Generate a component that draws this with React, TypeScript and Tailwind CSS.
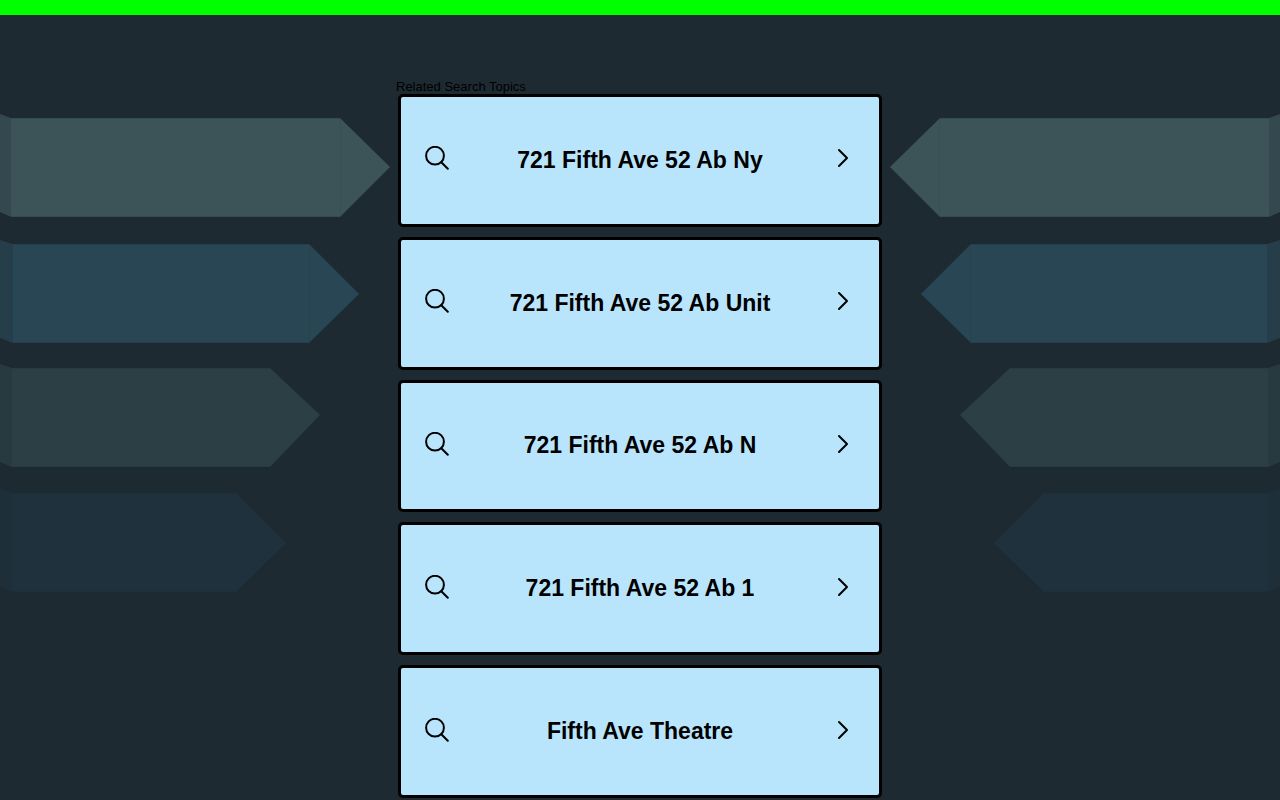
const topics = [
  '721 Fifth Ave 52 Ab Ny',
  '721 Fifth Ave 52 Ab Unit',
  '721 Fifth Ave 52 Ab N',
  '721 Fifth Ave 52 Ab 1',
  'Fifth Ave Theatre',
];

// top: y of the band, fold: x where the side face meets the band,
// base: x where the arrow head starts, tip: y of the arrow point
const ribbons = [
  { top: 18, fold: 11, base: 340, tip: 67, face: '#3c5458', side: '#33484f', seam: true },
  { top: 144, fold: 13, base: 309, tip: 194, face: '#284653', side: '#253e4a', seam: true },
  { top: 268, fold: 12, base: 270, tip: 315, face: '#2c3f44', side: '#28393f', seam: false },
  { top: 393, fold: 12, base: 236, tip: 443, face: '#1f313c', side: '#1e2f39', seam: true },
];

function Ribbons({ className }: { className?: string }) {
  return (
    <svg className={className} width="396" height="500" viewBox="0 0 396 500" aria-hidden="true">
      {ribbons.map(({ top, fold, base, tip, face, side, seam }) => (
        <g key={top}>
          <path d={`M0 ${top - 4}L${fold} ${top}V${top + 99}L0 ${top + 94}Z`} fill={side} />
          <path
            d={`M${fold} ${top}H${base}L${base + 50} ${tip}L${base} ${top + 99}H${fold}Z`}
            fill={face}
          />
          <path
            d={`M${fold} ${top + 0.5}H${base}M${fold} ${top + 98.5}H${base}`}
            stroke={side}
            strokeOpacity="0.6"
          />
          {seam && (
            <path d={`M${base + 0.5} ${top + 1}V${top + 98}`} stroke={side} strokeOpacity="0.4" />
          )}
        </g>
      ))}
    </svg>
  );
}

function SearchIcon() {
  return (
    <svg className="mb-1 shrink-0" width="24" height="24" viewBox="0 0 24 24" fill="none" stroke="#000" strokeWidth="2" strokeLinecap="round" aria-hidden="true">
      <circle cx="10" cy="9.7" r="8.9" />
      <path d="M16.3 16.2L22.8 22.7" />
    </svg>
  );
}

function ChevronIcon() {
  return (
    <svg className="mb-1 shrink-0" width="24" height="24" viewBox="0 0 24 24" fill="none" stroke="#000" strokeWidth="2" strokeLinecap="round" strokeLinejoin="round" aria-hidden="true">
      <path d="M8 4L16 12L8 20" />
    </svg>
  );
}

function TopicCard({ title }: { title: string }) {
  return (
    <a
      href="#"
      className="flex h-full items-center rounded-[5px] border-3 border-black bg-[#b9e5fc] px-6 text-black"
    >
      <SearchIcon />
      <span className="mb-px flex-1 text-center text-[23px] leading-7 font-bold">{title}</span>
      <ChevronIcon />
    </a>
  );
}

export default function App() {
  return (
    <div className="min-h-screen bg-[#1e2a32] font-['Liberation_Sans',Arial,sans-serif]">
      <div className="h-[15px] bg-[#00ff00]" />
      <div className="flex justify-center">
        <div className="flex min-w-0 flex-1 justify-start overflow-hidden pt-[85px]">
          <Ribbons className="shrink-0" />
        </div>
        <main className="w-[488px] shrink-0 pt-16">
          <h1 className="text-[13px] leading-[15px] text-black">Related Search Topics</h1>
          <ul className="grid h-[704px] auto-rows-fr gap-[10px] px-[2px]">
            {topics.map((title) => (
              <li key={title}>
                <TopicCard title={title} />
              </li>
            ))}
          </ul>
        </main>
        <div className="flex min-w-0 flex-1 justify-end overflow-hidden pt-[85px]">
          <Ribbons className="shrink-0 -scale-x-100" />
        </div>
      </div>
    </div>
  );
}
